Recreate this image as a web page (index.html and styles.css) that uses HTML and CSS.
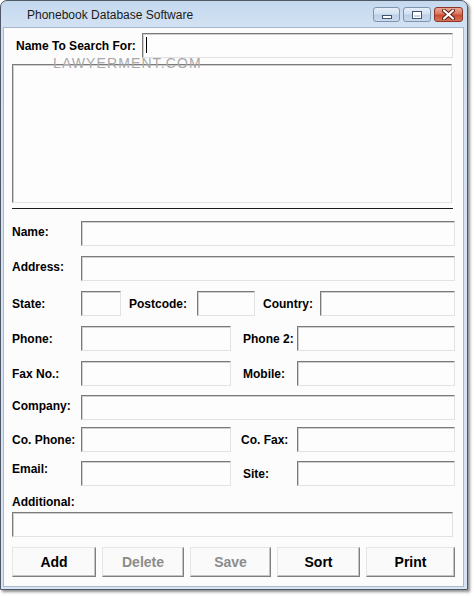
FILE: index.html
```html
<!DOCTYPE html>
<html>
<head>
<meta charset="utf-8">
<title>Phonebook Database Software</title>
<link rel="stylesheet" href="styles.css">
</head>
<body>
<div class="window">
  <div class="titlebar">
    <span class="title">Phonebook Database Software</span>
    <div class="controls">
      <span class="cbtn min"><span class="min-glyph"></span></span>
      <span class="cbtn max"><span class="max-glyph"></span></span>
      <span class="cbtn close">
        <svg width="13" height="11" viewBox="0 0 13 11">
          <path d="M2 1.5 L11 9.5 M11 1.5 L2 9.5" stroke="#5a1a10" stroke-width="4" stroke-linecap="round"/>
          <path d="M2 1.5 L11 9.5 M11 1.5 L2 9.5" stroke="#ffffff" stroke-width="2.2" stroke-linecap="round"/>
        </svg>
      </span>
    </div>
  </div>
  <div class="client">
    <div class="watermark">LAWYERMENT.COM</div>
    <div class="search-row">
      <span class="search-label">Name To Search For:</span>
      <div class="field search-field"><span class="caret"></span></div>
    </div>
    <div class="listbox"></div>
    <div class="separator"></div>
    <div class="form">
      <div class="row">
        <span class="label label-up">Name:</span>
        <div class="field w-full"></div>
      </div>
      <div class="row">
        <span class="label label-up">Address:</span>
        <div class="field w-full"></div>
      </div>
      <div class="row">
        <span class="label">State:</span>
        <div class="field w-state"></div>
        <span class="label-in l-postcode">Postcode:</span>
        <div class="field w-postcode"></div>
        <span class="label-in l-country">Country:</span>
        <div class="field w-country"></div>
      </div>
      <div class="row">
        <span class="label">Phone:</span>
        <div class="field w-half"></div>
        <span class="label-in l-second">Phone 2:</span>
        <div class="field w-second"></div>
      </div>
      <div class="row">
        <span class="label">Fax No.:</span>
        <div class="field w-half"></div>
        <span class="label-in l-second">Mobile:</span>
        <div class="field w-second"></div>
      </div>
      <div class="row row-company">
        <span class="label label-up">Company:</span>
        <div class="field w-full"></div>
      </div>
      <div class="row row-cophone">
        <span class="label">Co. Phone:</span>
        <div class="field w-half"></div>
        <span class="label-in l-second l-cofax">Co. Fax:</span>
        <div class="field w-second"></div>
      </div>
      <div class="row row-email">
        <span class="label label-high">Email:</span>
        <div class="field w-half"></div>
        <span class="label-in l-second">Site:</span>
        <div class="field w-second"></div>
      </div>
    </div>
    <div class="additional-label">Additional:</div>
    <div class="field additional-field"></div>
    <div class="buttons">
      <div class="btn">Add</div>
      <div class="btn disabled">Delete</div>
      <div class="btn disabled">Save</div>
      <div class="btn">Sort</div>
      <div class="btn">Print</div>
    </div>
  </div>
</div>
</body>
</html>
```

FILE: styles.css
```css
* {
  box-sizing: border-box;
}

html, body {
  margin: 0;
  padding: 0;
  background: #ffffff;
}

body {
  font-family: "Liberation Sans", Arial, sans-serif;
  width: 474px;
  height: 596px;
  overflow: hidden;
}

.window {
  position: relative;
  width: 468px;
  height: 590px;
  border: 1px solid #4e5866;
  border-radius: 7px 7px 0 0;
  background: linear-gradient(#c4d8ee 0px, #d3e2f3 26px, #d6e4f3 100%);
  padding: 0 3px 2px 2px;
  box-shadow: 2px 2px 3px rgba(0, 0, 0, 0.45);
  display: flex;
  flex-direction: column;
}

.titlebar {
  height: 26px;
  display: flex;
  align-items: flex-start;
  padding: 0 1px 0 24px;
  flex-shrink: 0;
}

.title {
  font-family: "Liberation Sans", Arial, sans-serif;
  font-size: 12px;
  line-height: 14px;
  color: #1a1a1a;
  margin-top: 7px;
  flex: 1;
}

.controls {
  display: flex;
  margin-top: 6px;
  gap: 2px;
}

.cbtn {
  display: flex;
  align-items: center;
  justify-content: center;
  height: 15px;
  border-radius: 3px;
}

.cbtn.min,
.cbtn.max {
  width: 27px;
  border: 1px solid #7f93ad;
  background: linear-gradient(#e6eef8 0%, #d2e0f0 48%, #bccfe6 52%, #c9daee 100%);
}

.cbtn.max {
  width: 28px;
  margin-left: 1px;
}

.cbtn.close {
  width: 29px;
  margin-left: 1px;
  border: 1px solid #8c3426;
  background: linear-gradient(#eba692 0%, #d9745c 48%, #c84b30 52%, #d67356 100%);
}

.min-glyph {
  width: 10px;
  height: 4px;
  margin-top: 5px;
  background: #ffffff;
  border: 1px solid #42546c;
}

.max-glyph {
  width: 10px;
  height: 8px;
  border: 1px solid #42546c;
  box-shadow: inset 0 0 0 1px #ffffff, inset 0 2px 0 1px #ffffff;
  background: #c6d6ea;
}

.client {
  position: relative;
  flex: 1;
  background: #fcfcfc;
  border: 1px solid #a9b9cc;
  display: flex;
  flex-direction: column;
}

.watermark {
  position: absolute;
  left: 49px;
  top: 27px;
  font-family: "Liberation Sans", Arial, sans-serif;
  font-size: 14px;
  line-height: 16px;
  letter-spacing: 1.1px;
  color: #a9a9a9;
}

.field {
  height: 25px;
  background: #fdfdfd;
  border-top: 1px solid #7a7a7a;
  border-left: 1px solid #7a7a7a;
  border-right: 1px solid #e2e2e2;
  border-bottom: 1px solid #e2e2e2;
  box-shadow: inset 1px 1px 0 #cfcfcf;
}

.search-row {
  display: flex;
  align-items: center;
  margin-top: 5px;
  padding-left: 12px;
}

.search-label {
  width: 126px;
  font-size: 12px;
  font-weight: bold;
  color: #000;
}

.search-field {
  width: 311px;
  position: relative;
}

.caret {
  position: absolute;
  left: 3px;
  top: 3px;
  width: 1px;
  height: 16px;
  background: #000;
}

.listbox {
  margin-top: 6px;
  margin-left: 8px;
  width: 440px;
  height: 139px;
  background: #fdfdfd;
  border-top: 1px solid #7a7a7a;
  border-left: 1px solid #7a7a7a;
  border-right: 1px solid #e2e2e2;
  border-bottom: 1px solid #e2e2e2;
  box-shadow: inset 1px 1px 0 #cfcfcf;
}

.separator {
  margin-top: 5px;
  margin-left: 8px;
  width: 441px;
  height: 1px;
  background: #1c1c1c;
}

.form {
  display: flex;
  flex-direction: column;
  gap: 10px;
  margin-top: 12px;
  padding-left: 8px;
}

.row {
  display: flex;
  align-items: center;
  height: 25px;
}

.row-company {
  margin-top: -1px;
}

.row-cophone {
  margin-top: -3px;
}

.row-email {
  margin-top: -1px;
}

.label,
.label-in,
.additional-label {
  font-size: 12px;
  line-height: 14px;
  font-weight: bold;
  color: #000;
  white-space: nowrap;
}

.label {
  width: 69px;
  padding-top: 1px;
}

.label.label-up {
  padding-top: 0;
  padding-bottom: 4px;
}

.label.label-high {
  padding-top: 0;
  padding-bottom: 9px;
}

.label-in {
  padding-top: 1px;
}

.w-full {
  width: 374px;
}

.w-half {
  width: 150px;
}

.w-second {
  width: 158px;
}

.l-second {
  margin-left: 12px;
  width: 54px;
}

.l-cofax {
  margin-left: 10px;
  width: 56px;
}

.w-state {
  width: 40px;
}

.l-postcode {
  margin-left: 8px;
  width: 68px;
}

.w-postcode {
  width: 58px;
}

.l-country {
  margin-left: 8px;
  width: 57px;
}

.w-country {
  width: 135px;
}

.additional-label {
  margin-top: 9px;
  margin-left: 8px;
}

.additional-field {
  margin-top: 3px;
  margin-left: 8px;
  width: 441px;
}

.buttons {
  display: grid;
  grid-template-columns: 84px 82px 81px 83px 89px;
  gap: 6px;
  margin-top: 10px;
  margin-left: 8px;
}

.btn {
  height: 30px;
  display: flex;
  align-items: center;
  justify-content: center;
  font-size: 14px;
  font-weight: bold;
  color: #000;
  background: #fafafa;
  border-top: 1px solid #e6e6e6;
  border-left: 1px solid #e6e6e6;
  border-right: 1px solid #7e7e7e;
  border-bottom: 1px solid #7e7e7e;
  box-shadow: inset -1px -1px 0 #c4c4c4;
}

.btn.disabled {
  color: #8c8c8c;
}
```
